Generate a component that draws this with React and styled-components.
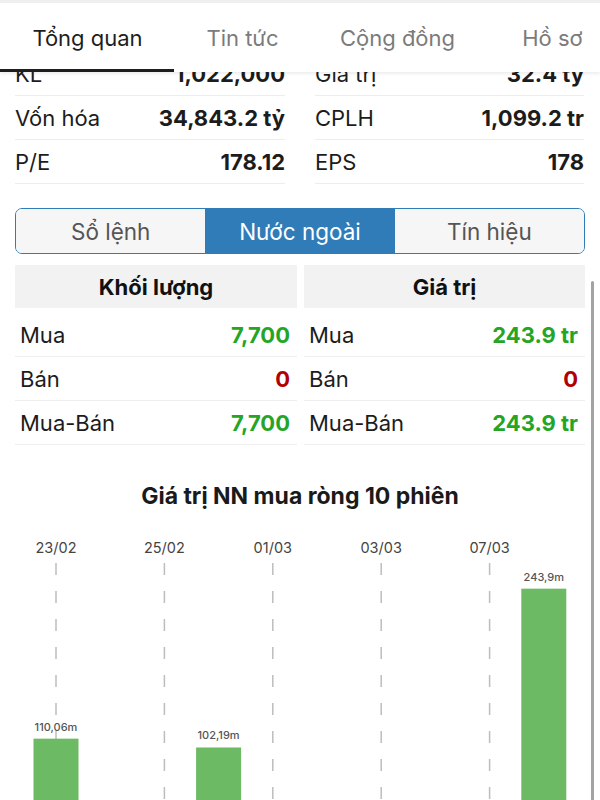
import React from 'react';
import styled, { createGlobalStyle } from 'styled-components';

const GlobalStyle = createGlobalStyle`
  body {
    margin: 0;
    background: #fff;
    font-family: Inter, "Liberation Sans", sans-serif;
    color: #1c1c1c;
  }
`;

const Page = styled.div`
  position: relative;
  width: 600px;
  height: 800px;
  overflow: hidden;
  background: #fff;
`;

const Header = styled.div`
  position: relative;
  z-index: 2;
  background: #fff;
  border-top: 3px solid #efefef;
  box-shadow: 0 2px 3px rgba(0, 0, 0, 0.07);
`;

const TabRow = styled.div`
  display: flex;
  height: 66px;
  padding-left: 10px;
  align-items: center;
`;

const Tab = styled.div`
  flex: 0 0 155px;
  text-align: center;
  font-size: 22px;
  padding-top: 4px;
  white-space: nowrap;
  color: ${(props) => (props.active ? '#1e1e1e' : '#7b7b7b')};
`;

const Indicator = styled.div`
  width: 174px;
  height: 3px;
  background: #1e1e1e;
`;

const Content = styled.div`
  margin-top: -20px;
`;

const StatGrid = styled.div`
  display: grid;
  grid-template-columns: 270px 269px;
  column-gap: 30px;
  padding: 0 15px;
`;

const StatRow = styled.div`
  display: flex;
  justify-content: space-between;
  align-items: center;
  height: 43px;
  border-bottom: 1px solid #ededed;
  font-size: 22px;
`;

const Value = styled.span`
  font-weight: 700;
  color: ${(props) => props.color || '#1c1c1c'};
`;

const Segmented = styled.div`
  display: grid;
  grid-template-columns: repeat(3, 1fr);
  margin: 24px 15px 0;
  height: 44px;
  border: 1.5px solid #2e7db9;
  border-radius: 7px;
  overflow: hidden;
`;

const Segment = styled.div`
  display: flex;
  align-items: center;
  justify-content: center;
  font-size: 22.5px;
  background: ${(props) => (props.active ? '#2f7cb9' : '#f6f6f6')};
  color: ${(props) => (props.active ? '#fff' : '#555')};
`;

const Foreign = styled.div`
  display: grid;
  grid-template-columns: 282px 281px;
  column-gap: 7px;
  margin: 11px 15px 0;
`;

const Column = styled.div`
  display: flex;
  flex-direction: column;
`;

const HeadCell = styled.div`
  height: 43px;
  margin-bottom: 5px;
  display: flex;
  align-items: center;
  justify-content: center;
  background: #f2f2f2;
  font-size: 22px;
  font-weight: 700;
  color: #111;
`;

const ForeignRow = styled.div`
  display: flex;
  justify-content: space-between;
  align-items: center;
  height: 43px;
  padding: 0 7px 0 5px;
  border-bottom: 1px solid #eeeeee;
  font-size: 22px;
`;

const ChartTitle = styled.div`
  margin-top: 37px;
  text-align: center;
  font-size: 23px;
  font-weight: 700;
  color: #1a1a1a;
`;

const ChartWrap = styled.div`
  margin-top: 21px;
`;

const Scrollbar = styled.div`
  position: absolute;
  right: 6px;
  top: 281px;
  width: 3px;
  height: 530px;
  border-radius: 2px;
  background: #a3a3a3;
`;

const GREEN = '#25a525';
const RED = '#b00000';

const stats = [
  [['KL', '1,022,000'], ['Giá trị', '32.4 tỷ']],
  [['Vốn hóa', '34,843.2 tỷ'], ['CPLH', '1,099.2 tr']],
  [['P/E', '178.12'], ['EPS', '178']],
];

const foreign = {
  left: { title: 'Khối lượng', rows: [['Mua', '7,700', GREEN], ['Bán', '0', RED], ['Mua-Bán', '7,700', GREEN]] },
  right: { title: 'Giá trị', rows: [['Mua', '243.9 tr', GREEN], ['Bán', '0', RED], ['Mua-Bán', '243.9 tr', GREEN]] },
};

const sessions = [
  { date: '23/02', value: 110.06, label: '110,06m' },
  {},
  { date: '25/02' },
  { value: 102.19, label: '102,19m' },
  { date: '01/03' },
  {},
  { date: '03/03' },
  {},
  { date: '07/03' },
  { value: 243.9, label: '243,9m' },
];

function Chart() {
  const base = 331;
  const scale = 1.1207;
  const x0 = 56;
  const step = 54.2;
  return (
    <svg width="600" height="340" viewBox="0 0 600 340">
      {sessions.map((s, i) =>
        s.date ? (
          <g key={'d' + i}>
            <text x={x0 + i * step} y={22} textAnchor="middle" fontSize="14.5" fill="#444" fontFamily="Inter, sans-serif">
              {s.date}
            </text>
            <line x1={x0 + i * step} x2={x0 + i * step} y1={32} y2={340} stroke="#bdbdbd" strokeWidth="1.5" strokeDasharray="12 16" />
          </g>
        ) : null
      )}
      {sessions.map((s, i) =>
        s.value ? (
          <g key={'b' + i}>
            <rect x={x0 + i * step - 22.5} y={base - s.value * scale} width="45" height={s.value * scale} fill="#6dba65" />
            <text x={x0 + i * step} y={base - s.value * scale - 8} textAnchor="middle" fontSize="11" fontWeight="500" fill="#555" fontFamily="Inter, sans-serif">
              {s.label}
            </text>
          </g>
        ) : null
      )}
    </svg>
  );
}

export default function App() {
  return (
    <Page>
      <GlobalStyle />
      <Header>
        <TabRow>
          <Tab active>Tổng quan</Tab>
          <Tab>Tin tức</Tab>
          <Tab>Cộng đồng</Tab>
          <Tab>Hồ sơ</Tab>
        </TabRow>
        <Indicator />
      </Header>
      <Content>
        <StatGrid>
          {stats.map((row) =>
            row.map(([label, value]) => (
              <StatRow key={label}>
                <span>{label}</span>
                <Value>{value}</Value>
              </StatRow>
            ))
          )}
        </StatGrid>
        <Segmented>
          <Segment>Sổ lệnh</Segment>
          <Segment active>Nước ngoài</Segment>
          <Segment>Tín hiệu</Segment>
        </Segmented>
        <Foreign>
          {[foreign.left, foreign.right].map((col) => (
            <Column key={col.title}>
              <HeadCell>{col.title}</HeadCell>
              {col.rows.map(([label, value, color]) => (
                <ForeignRow key={label}>
                  <span>{label}</span>
                  <Value color={color}>{value}</Value>
                </ForeignRow>
              ))}
            </Column>
          ))}
        </Foreign>
        <ChartTitle>Giá trị NN mua ròng 10 phiên</ChartTitle>
        <ChartWrap>
          <Chart />
        </ChartWrap>
      </Content>
      <Scrollbar />
    </Page>
  );
}
